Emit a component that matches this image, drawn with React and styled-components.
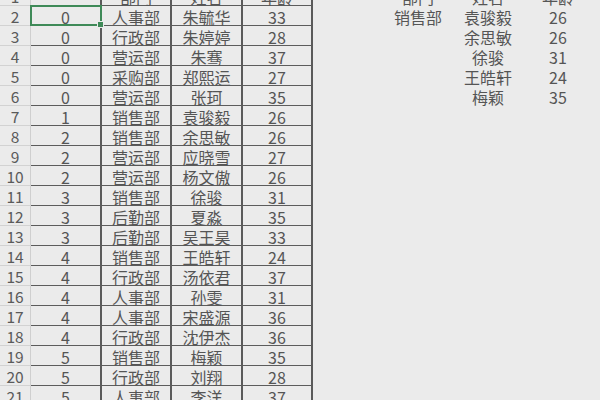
import React from "react";
import styled, { createGlobalStyle } from "styled-components";

const Global = createGlobalStyle`
  html, body { margin: 0; padding: 0; background: #ebebeb; }
  body { font-family: "Noto Sans CJK SC", "Noto Sans", sans-serif; }
`;

const Viewport = styled.div`
  width: 600px;
  height: 400px;
  overflow: hidden;
  background: #ebebeb;
`;

const Sheet = styled.div`
  display: grid;
  grid-template-columns: 31px 71px 70px 71px 70px 70px 70px 70px 70px;
  grid-auto-rows: 20px;
  margin-top: -14px;
`;

const Cell = styled.div`
  box-sizing: border-box;
  display: flex;
  align-items: center;
  justify-content: center;
  font-size: 16px;
  color: #555;
  line-height: 1;
  padding-top: 2px;
  white-space: nowrap;
  position: relative;
`;

const RowHead = styled(Cell)`
  font-size: 15.5px;
  color: #5a5a5a;
  border-bottom: 1px solid #d2d2d2;
  border-right: 1px solid #cfcfcf;
`;

const DataCell = styled(Cell)`
  border-bottom: 1px solid #5c5c5c;
  border-right: 2px solid #5a5a5a;
`;

const FreeCell = styled(Cell)``;

const Selection = styled.div`
  position: absolute;
  z-index: 5;
  left: -1px;
  top: -1px;
  right: -2px;
  bottom: -1px;
  border: 2px solid #3f8a58;
  pointer-events: none;
  &::after {
    content: "";
    position: absolute;
    right: -4px;
    bottom: -4px;
    width: 5px;
    height: 5px;
    background: #3f8a58;
    border: 1px solid #ebebeb;
  }
`;

const rows = [
  ["", "部门", "姓名", "年龄"],
  ["0", "人事部", "朱毓华", "33"],
  ["0", "行政部", "朱婷婷", "28"],
  ["0", "营运部", "朱骞", "37"],
  ["0", "采购部", "郑熙运", "27"],
  ["0", "营运部", "张珂", "35"],
  ["1", "销售部", "袁骏毅", "26"],
  ["2", "销售部", "余思敏", "26"],
  ["2", "营运部", "应晓雪", "27"],
  ["2", "营运部", "杨文傲", "26"],
  ["3", "销售部", "徐骏", "31"],
  ["3", "后勤部", "夏淼", "35"],
  ["3", "后勤部", "吴王昊", "33"],
  ["4", "销售部", "王皓轩", "24"],
  ["4", "行政部", "汤依君", "37"],
  ["4", "人事部", "孙雯", "31"],
  ["4", "人事部", "宋盛源", "36"],
  ["4", "行政部", "沈伊杰", "36"],
  ["5", "销售部", "梅颖", "35"],
  ["5", "行政部", "刘翔", "28"],
  ["5", "人事部", "李洋", "37"],
];

const side = [
  ["", "部门", "姓名", "年龄"],
  ["", "销售部", "袁骏毅", "26"],
  ["", "", "余思敏", "26"],
  ["", "", "徐骏", "31"],
  ["", "", "王皓轩", "24"],
  ["", "", "梅颖", "35"],
];

export default function App() {
  return (
    <>
      <Global />
      <Viewport>
        <Sheet>
          {rows.map((r, i) => {
            const s = side[i] || ["", "", "", ""];
            return (
              <React.Fragment key={i}>
                <RowHead>{i + 1}</RowHead>
                {r.map((v, j) => (
                  <DataCell key={j}>
                    {v}
                    {i === 1 && j === 0 && <Selection />}
                  </DataCell>
                ))}
                {s.map((v, j) => (
                  <FreeCell key={"s" + j}>{v}</FreeCell>
                ))}
              </React.Fragment>
            );
          })}
        </Sheet>
      </Viewport>
    </>
  );
}
